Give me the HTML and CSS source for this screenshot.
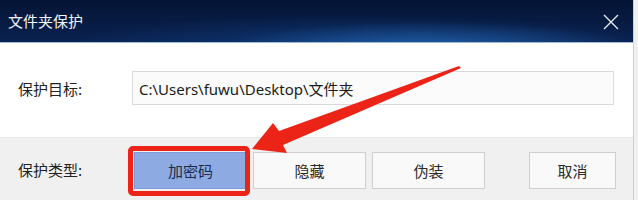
FILE: index.html
```html
<!DOCTYPE html>
<html lang="zh-CN">
<head>
<meta charset="utf-8">
<title>文件夹保护</title>
<link rel="stylesheet" href="styles.css">
</head>
<body>
<div class="window">
  <div class="titlebar">
    <span class="title">文件夹保护</span>
    <svg class="close" width="16" height="16" viewBox="0 0 16 16"><path d="M1 1L15 15M15 1L1 15" stroke="#e6ecf5" stroke-width="1.4" fill="none"/></svg>
  </div>
  <div class="content">
    <div class="row">
      <span class="label">保护目标:</span>
      <div class="input">C:\Users\fuwu\Desktop\文件夹</div>
    </div>
  </div>
  <div class="footer">
    <span class="label">保护类型:</span>
    <button class="btn primary">加密码</button>
    <button class="btn">隐藏</button>
    <button class="btn">伪装</button>
    <button class="btn cancel">取消</button>
  </div>
  <svg class="arrow" width="638" height="200" viewBox="0 0 638 200"><polygon points="252,149 273,123 279,131 459,66 461,68 283,145 287,153" fill="#ec2418"/></svg>
</div>
</body>
</html>
```

FILE: styles.css
```css
html, body {
  margin: 0;
  padding: 0;
  width: 638px;
  height: 200px;
  overflow: hidden;
  background: #f0f0f0;
}
.window {
  position: relative;
  width: 633px;
  height: 200px;
  border-right: 1px solid #cfcfcf;
  display: flex;
  flex-direction: column;
  font-family: "Noto Sans CJK SC", "Noto Sans", sans-serif;
  color: #222;
}
.titlebar {
  height: 42px;
  border-bottom: 1px solid #9fbbd8;
  display: flex;
  align-items: center;
  justify-content: space-between;
  padding: 0 14px 0 8px;
  background:
    radial-gradient(ellipse 200px 24px at 430px 46px, rgba(40,115,195,0.6), rgba(20,80,160,0) 100%),
    radial-gradient(ellipse 300px 34px at 360px 48px, rgba(20,80,160,0.5), rgba(20,80,160,0) 100%),
    linear-gradient(180deg, #041434 0%, #0a2250 100%);
}
.title {
  color: #f2f5fa;
  font-size: 15px;
  line-height: 20px;
}
.close {
  display: block;
  margin-top: 1px;
}
.content {
  height: 94px;
  background: #ffffff;
  box-sizing: border-box;
  padding: 28px 19px 0 18px;
}
.row {
  display: flex;
  align-items: center;
}
.label {
  width: 114px;
  flex: none;
  font-size: 15px;
  color: #222;
}
.input {
  flex: 1;
  height: 34px;
  box-sizing: border-box;
  border: 1px solid #dadada;
  background: #fbfbfb;
  padding-left: 6px;
  display: flex;
  align-items: center;
  font-family: "Noto Sans", "Noto Sans CJK SC", sans-serif;
  font-size: 15px;
  color: #1a1a1a;
}
.footer {
  flex: 1;
  background: #f0f0f0;
  border-top: 1px solid #e6e6e6;
  box-sizing: border-box;
  padding: 14px 17px 0 18px;
  display: flex;
  align-items: flex-start;
  gap: 6px;
}
.footer .label {
  width: 110px;
  line-height: 36px;
}
.btn {
  position: relative;
  width: 113px;
  height: 37px;
  border: 1px solid #cfcfcf;
  background: #f9f9f9;
  font-family: "Noto Sans CJK SC", sans-serif;
  font-size: 15px;
  color: #2a2a2a;
  padding: 0;
}
.btn.primary {
  background: #8eaae3;
  border-color: #7d9bd8;
  color: #1b2a4c;
}
.btn.primary::after {
  content: "";
  position: absolute;
  left: -7px;
  right: -4px;
  top: -7px;
  bottom: -8px;
  border: 5px solid #ec2418;
  border-radius: 5px;
}
.btn.cancel {
  width: 87px;
  margin-left: auto;
}
.arrow {
  position: absolute;
  left: 0;
  top: 0;
  pointer-events: none;
}
```
